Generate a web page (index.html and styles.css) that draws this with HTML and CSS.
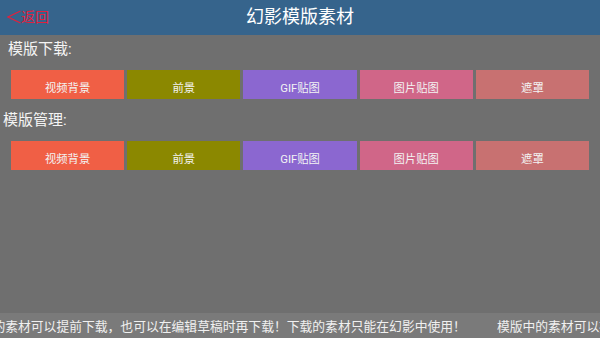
FILE: index.html
```html
<!DOCTYPE html>
<html lang="zh">
<head>
<meta charset="utf-8">
<title>幻影模版素材</title>
<link rel="stylesheet" href="styles.css">
</head>
<body>
<div class="page">
  <header class="topbar">
    <div class="back">
      <svg class="chev" width="14" height="14" viewBox="0 0 14 14"><path d="M13.5 1 L1 7 L13.5 13" fill="none" stroke="#e3203c" stroke-width="1.3"/></svg>
      <span>返回</span>
    </div>
    <div class="title">幻影模版素材</div>
    <div></div>
  </header>

  <div class="label first">模版下载:</div>
  <div class="row">
    <div class="btn c1">视频背景</div>
    <div class="btn c2">前景</div>
    <div class="btn c3">GIF贴图</div>
    <div class="btn c4">图片贴图</div>
    <div class="btn c5">遮罩</div>
  </div>

  <div class="label second">模版管理:</div>
  <div class="row">
    <div class="btn c1">视频背景</div>
    <div class="btn c2">前景</div>
    <div class="btn c3">GIF贴图</div>
    <div class="btn c4">图片贴图</div>
    <div class="btn c5">遮罩</div>
  </div>

  <div class="spacer"></div>

  <footer class="marquee">
    <div class="track">
      <span class="msg">模版中的素材可以提前下载，也可以在编辑草稿时再下载！下载的素材只能在幻影中使用！</span>
      <span class="msg">模版中的素材可以提前下载，也可以在编辑草稿时再下载！下载的素材只能在幻影中使用！</span>
    </div>
  </footer>
</div>
</body>
</html>
```
FILE: styles.css
```css
* { box-sizing: border-box; }
html, body { margin: 0; padding: 0; }
body {
  width: 600px;
  height: 338px;
  overflow: hidden;
  background: #6f6f6f;
  font-family: Roboto, "Noto Sans CJK SC", sans-serif;
  color: #f2f2f2;
}
.page {
  display: flex;
  flex-direction: column;
  height: 338px;
}
.topbar {
  height: 35px;
  flex: none;
  background: #36648c;
  display: grid;
  grid-template-columns: 1fr auto 1fr;
  align-items: center;
}
.back {
  display: flex;
  align-items: center;
  padding-left: 7px;
  color: #e3203c;
  font-size: 14px;
  line-height: 16px;
  padding-bottom: 2px;
}
.chev { display: block; }
.title {
  font-size: 18px;
  line-height: 22px;
  color: #ffffff;
  padding-bottom: 2px;
}
.label {
  font-size: 15px;
  line-height: 20px;
  height: 20px;
  color: #f4f4f4;
}
.label.first { margin-top: 4px; padding-left: 8px; }
.label.second { margin-top: 11px; padding-left: 3px; }
.row {
  margin-top: 11px;
  padding: 0 11px;
  display: grid;
  grid-template-columns: repeat(5, 1fr);
  gap: 3px;
  height: 29px;
}
.btn {
  display: flex;
  align-items: center;
  justify-content: center;
  font-size: 11.3px;
  color: #f3f3f3;
  padding-top: 4px;
}
.c1 { background: #f05f45; }
.c2 { background: #8b8800; }
.c3 { background: #8b67d0; }
.c4 { background: #d06688; }
.c5 { background: #c87171; }
.spacer { flex: 1; }
.marquee {
  height: 25px;
  flex: none;
  background: #7a7a7a;
  overflow: hidden;
  display: flex;
  align-items: center;
}
.track {
  display: flex;
  margin-left: -46px;
  white-space: nowrap;
  font-size: 12.8px;
  line-height: 16px;
  color: #f0f0f0;
  gap: 31px;
  padding-top: 2px;
}
.msg { flex: none; }
```
